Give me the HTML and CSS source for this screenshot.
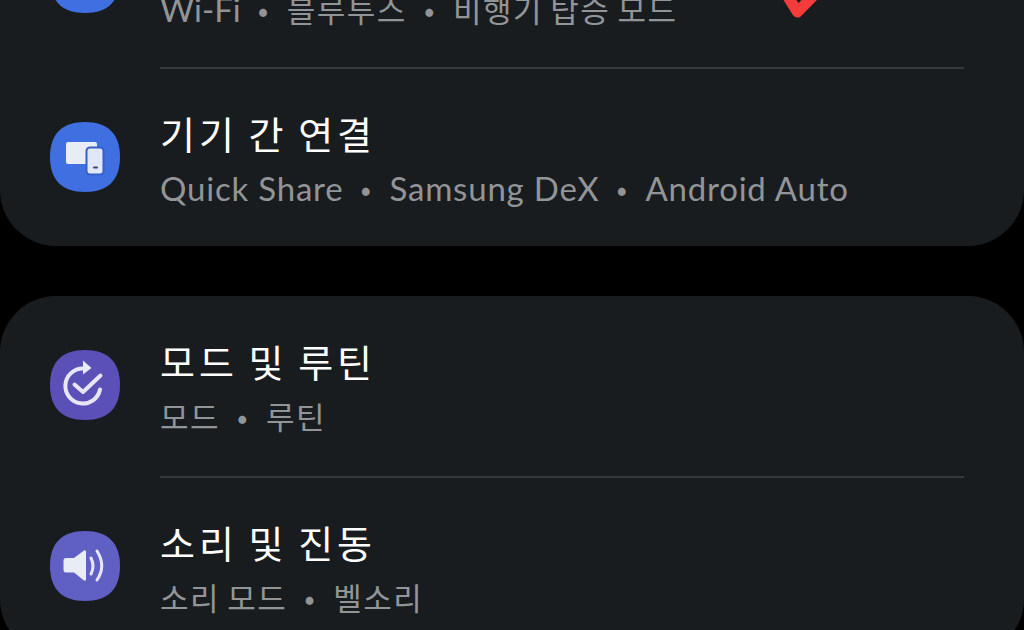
FILE: index.html
```html
<!doctype html>
<html lang="ko">
  <head>
    <meta charset="utf-8">
    <title>설정</title>
    <link rel="stylesheet" href="styles.css">
  </head>
  <body>
    <!-- first group, scrolled partly out of view -->
    <section class="card card-first">
      <div class="row">
        <svg class="icon" viewBox="0 0 70 70"><path class="blob-blue" d="M35 0C58 0 70 12 70 35S58 70 35 70 0 58 0 35 12 0 35 0Z"/></svg>
        <div class="text">
          <div class="title">연결</div>
          <div class="sub"><span class="latin tight">Wi-Fi</span><span class="sep">•</span>블루투스<span class="sep">•</span>비행기 탑승 모드</div>
        </div>
      </div>
      <div class="divider"></div>
      <div class="row">
        <svg class="icon" viewBox="0 0 70 70">
          <path class="blob-blue" d="M35 0C58 0 70 12 70 35S58 70 35 70 0 58 0 35 12 0 35 0Z"/>
          <rect class="glyph" x="16" y="20" width="31" height="22" rx="2"/>
          <rect class="glyph-light" x="36.500" y="25.500" width="17" height="27" rx="3.500"/>
          <rect class="pill" x="43" y="44.500" width="5" height="2" rx="1"/>
        </svg>
        <div class="text">
          <div class="title">기기 간 연결</div>
          <div class="sub"><span class="latin">Quick Share</span><span class="sep">•</span><span class="latin">Samsung DeX</span><span class="sep">•</span><span class="latin">Android Auto</span></div>
        </div>
      </div>
    </section>

    <section class="card">
      <div class="row row-tall">
        <svg class="icon" viewBox="0 0 70 70">
          <path class="blob-purple" d="M35 0C58 0 70 12 70 35S58 70 35 70 0 58 0 35 12 0 35 0Z"/>
          <path class="line" d="M33 18.500A17.500 17.500 0 1 0 50 39.500"/>
          <path class="glyph" d="M33 10.500L41.500 18 33 24.500Z"/>
          <path class="line" d="M24.500 34.500L33 42 50.500 25.500"/>
        </svg>
        <div class="text">
          <div class="title">모드 및 루틴</div>
          <div class="sub">모드<span class="sep">•</span>루틴</div>
        </div>
      </div>
      <div class="divider"></div>
      <div class="row">
        <svg class="icon" viewBox="0 0 70 70">
          <path class="blob-violet" d="M35 0C58 0 70 12 70 35S58 70 35 70 0 58 0 35 12 0 35 0Z"/>
          <path class="glyph" d="M16 27H24L34 19.500Q36 18.500 36 21V48Q36 50.500 34 49.500L24 41.500H16Q13.500 41.500 13.500 39V29.500Q13.500 27 16 27Z"/>
          <path class="wave" d="M41 27Q45 35 41 43"/>
          <path class="wave" d="M47 20Q56.500 35 47 49"/>
        </svg>
        <div class="text">
          <div class="title">소리 및 진동</div>
          <div class="sub">소리 모드<span class="sep">•</span>벨소리</div>
        </div>
      </div>
    </section>

    <!-- red hand drawn check on top of the screenshot -->
    <svg class="mark" viewBox="0 0 60 30"><path d="M13 -8L25.500 12 47 -10"/></svg>
  </body>
</html>
```

FILE: styles.css
```css
html, body {
  height: 630px;
}
body {
  margin: 0;
  overflow: hidden;
  background-color: #000;
  font-family: "Noto Sans CJK KR", sans-serif;
  color: #fff;
}
.card {
  background-color: #191c1f;
  border-radius: 56px;
  margin-bottom: 50px;
}
.card-first {
  margin-top: -110px;
}
.row {
  display: flex;
  align-items: center;
  gap: 40px;
  height: 177px;
  padding-left: 50px;
}
.row-tall {
  height: 180px;
}
.icon {
  flex: none;
  width: 70px;
  height: 70px;
  margin-top: -2px;
}
.text {
  padding-top: 5px;
}
.title {
  font-size: 38px;
  line-height: 54px;
  letter-spacing: 4px;
  word-spacing: -4px;
}
.sub {
  margin-top: 1px;
  font-size: 31px;
  line-height: 54px;
  letter-spacing: 1.500px;
  word-spacing: -3px;
  color: #929598;
}
.latin {
  font-family: Lato, sans-serif;
  font-size: 33px;
  letter-spacing: 0.800px;
  word-spacing: 0;
}
.tight {
  letter-spacing: 0;
}
.sep {
  margin: 0 17px;
}
.divider {
  height: 2px;
  margin: 0 60px 0 160px;
  background-color: #36393c;
}
.blob-blue {
  fill: #3f6fe0;
}
.blob-purple {
  fill: #5b4fb8;
}
.blob-violet {
  fill: #5f5fc4;
}
.glyph {
  fill: #e8ecf4;
}
.glyph-light {
  fill: #dfe7f8;
  stroke: #3560c8;
  stroke-width: 2;
}
.pill {
  fill: #3a4a70;
}
.line, .wave {
  fill: none;
  stroke: #e8e6f6;
  stroke-width: 4;
  stroke-linecap: round;
  stroke-linejoin: round;
}
.wave {
  stroke-width: 3;
}
.mark {
  position: absolute;
  left: 772px;
  top: 0;
  width: 60px;
  height: 30px;
}
.mark path {
  fill: none;
  stroke: #f53b3b;
  stroke-width: 11;
  stroke-linejoin: round;
}
```
